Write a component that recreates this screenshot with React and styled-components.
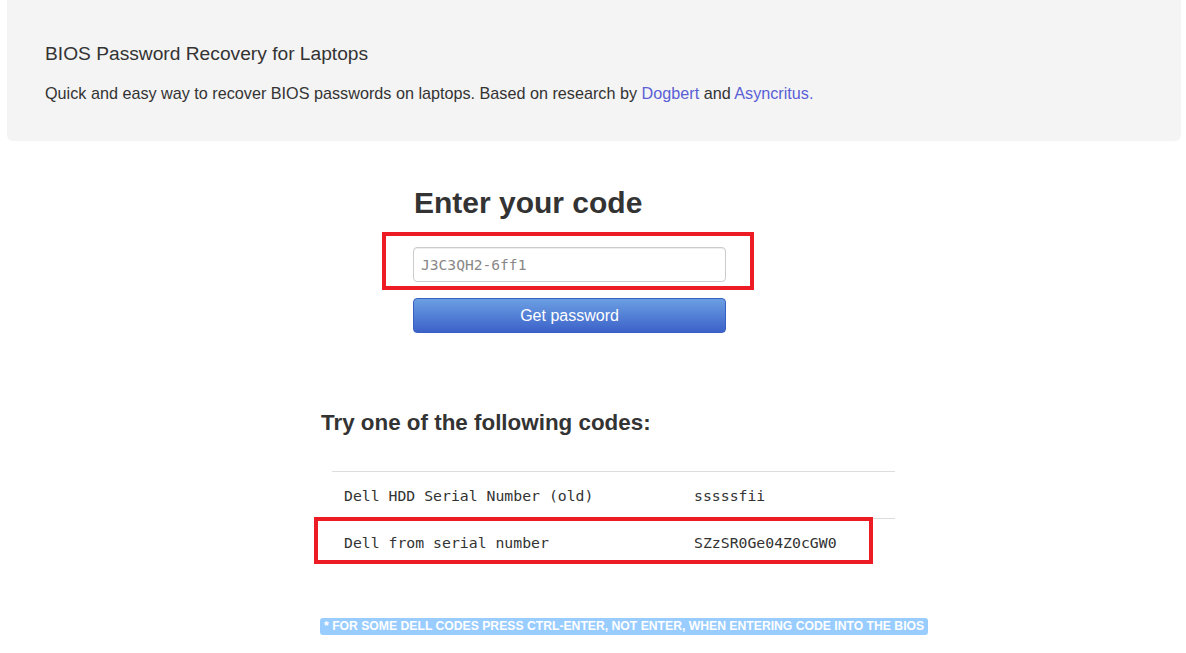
import styled, { createGlobalStyle } from 'styled-components';

const GlobalStyle = createGlobalStyle`
  body {
    margin: 0;
    background: #fff;
    font-family: "Liberation Sans", Arial, sans-serif;
    color: #333;
  }
`;

const Page = styled.div`
  width: 1186px;
  min-height: 653px;
  overflow: hidden;
`;

const Jumbotron = styled.header`
  margin: 0 5px 0 7px;
  height: 141px;
  box-sizing: border-box;
  padding: 40px 38px 0;
  background: #f4f4f4;
  border-radius: 0 0 6px 6px;
`;

const Title = styled.h1`
  margin: 0;
  font-size: 19.2px;
  font-weight: 400;
  line-height: 28px;
  color: #333;
`;

const Lead = styled.p`
  margin: 14px 0 0;
  font-size: 16.2px;
  line-height: 22px;
  color: #333;
`;

const Link = styled.a`
  color: #5a5fd6;
  text-decoration: none;
`;

const FormBlock = styled.section`
  width: 313px;
  margin: 44px 0 0 413px;
  display: flex;
  flex-direction: column;
`;

const Heading = styled.h2`
  margin: 0 0 0 1px;
  font-size: 30px;
  font-weight: 700;
  line-height: 36px;
  color: #333;
`;

const Marked = styled.div`
  position: relative;
`;

const RedFrame = styled.div`
  position: absolute;
  top: ${({ $top }) => $top}px;
  left: ${({ $left }) => $left}px;
  width: ${({ $w }) => $w}px;
  height: ${({ $h }) => $h}px;
  box-sizing: border-box;
  border: 4px solid #ed1c24;
  pointer-events: none;
`;

const CodeInput = styled.input`
  display: block;
  width: 313px;
  height: 35px;
  margin-top: 26px;
  box-sizing: border-box;
  padding: 0 7px;
  border: 1px solid #ccc;
  border-radius: 4px;
  box-shadow: inset 0 1px 1px rgba(0, 0, 0, 0.075);
  font-family: "DejaVu Sans Mono", "Liberation Mono", monospace;
  font-size: 14.6px;
  color: #555;
  outline: none;
  &::placeholder {
    color: #888;
  }
`;

const SubmitButton = styled.button`
  width: 313px;
  height: 35px;
  margin-top: 16px;
  border: 1px solid #3a5fc2;
  border-radius: 4px;
  background: linear-gradient(to bottom, #6b9fe2 0%, #3c62c9 100%);
  color: #fff;
  font-family: "Liberation Sans", Arial, sans-serif;
  font-size: 16px;
  cursor: pointer;
`;

const Results = styled.section`
  margin: 77px 0 0 321px;
`;

const ResultsHeading = styled.h3`
  margin: 0;
  font-size: 22.4px;
  font-weight: 700;
  line-height: 26px;
  color: #333;
`;

const CodeTable = styled.div`
  position: relative;
  width: 563px;
  margin: 35px 0 0 11px;
  border-top: 1px solid #ddd;
`;

const Row = styled.div`
  display: grid;
  grid-template-columns: 350px 1fr;
  height: 46px;
  align-items: center;
  border-top: ${({ $first }) => ($first ? 'none' : '1px solid #ddd')};
  font-family: "DejaVu Sans Mono", "Liberation Mono", monospace;
  font-size: 14.8px;
  color: #333;
`;

const Cell = styled.span`
  padding-left: 12px;
`;

const Notice = styled.span`
  display: inline-block;
  margin: 53px 0 0 320px;
  padding: 2px 4px 2px;
  background: #99ccff;
  border-radius: 3px;
  color: #fff;
  font-family: "Liberation Sans", Arial, sans-serif;
  font-size: 12.2px;
  font-weight: 700;
  line-height: 13px;
  white-space: nowrap;
`;

const codes = [
  { name: 'Dell HDD Serial Number (old)', value: 'sssssfii' },
  { name: 'Dell from serial number', value: 'SZzSR0Ge04Z0cGW0' },
];

export default function App() {
  return (
    <Page>
      <GlobalStyle />
      <Jumbotron>
        <Title>BIOS Password Recovery for Laptops</Title>
        <Lead>
          Quick and easy way to recover BIOS passwords on laptops. Based on research by{' '}
          <Link href="#">Dogbert</Link> and <Link href="#">Asyncritus.</Link>
        </Lead>
      </Jumbotron>

      <FormBlock>
        <Heading>Enter your code</Heading>
        <Marked>
          <CodeInput placeholder="J3C3QH2-6ff1" />
          <RedFrame $top={11} $left={-31} $w={372} $h={58} />
        </Marked>
        <SubmitButton>Get password</SubmitButton>
      </FormBlock>

      <Results>
        <ResultsHeading>Try one of the following codes:</ResultsHeading>
        <CodeTable>
          {codes.map((c, i) => (
            <Row key={c.name} $first={i === 0}>
              <Cell>{c.name}</Cell>
              <Cell>{c.value}</Cell>
            </Row>
          ))}
          <RedFrame $top={45} $left={-18} $w={559} $h={47} />
        </CodeTable>
      </Results>

      <Notice>* FOR SOME DELL CODES PRESS CTRL-ENTER, NOT ENTER, WHEN ENTERING CODE INTO THE BIOS</Notice>
    </Page>
  );
}
